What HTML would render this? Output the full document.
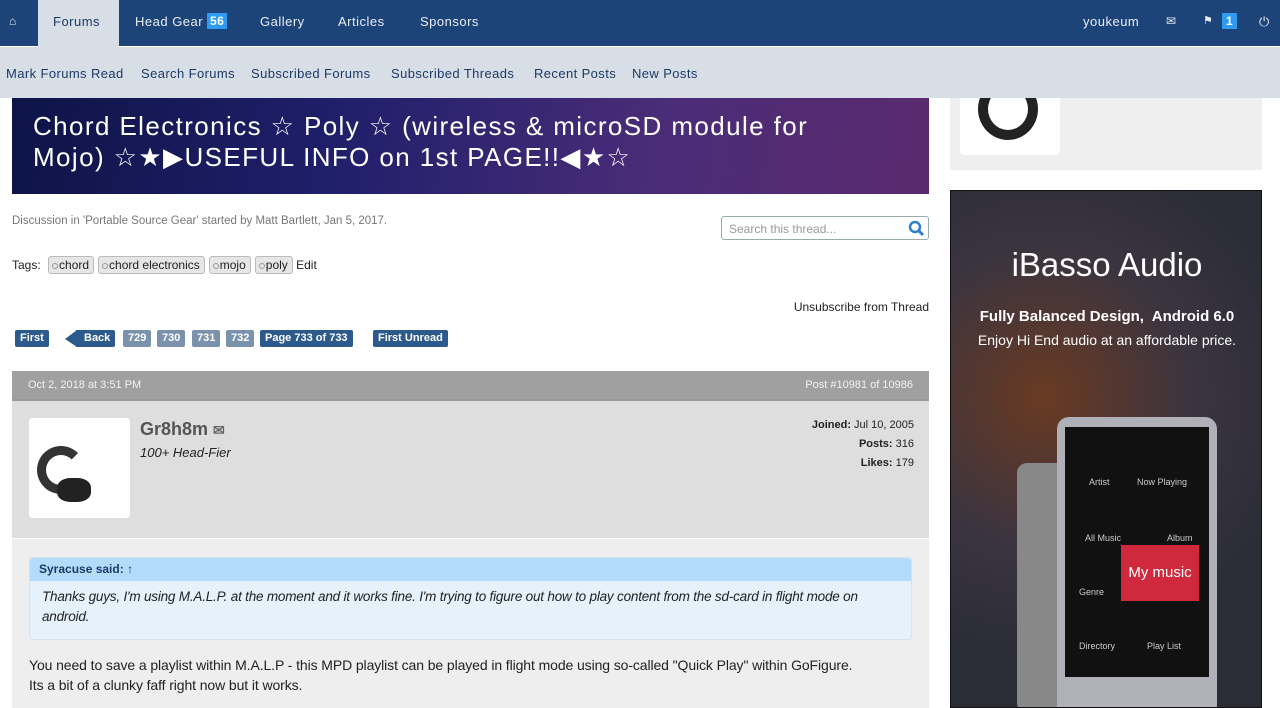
<!DOCTYPE html>
<html><head><meta charset="utf-8"><style>
*{margin:0;padding:0;box-sizing:border-box}
body{width:1280px;height:708px;overflow:hidden;background:#fff;font-family:"Liberation Sans",sans-serif;position:relative}
.a{position:absolute}
#nav{left:0;top:0;width:1280px;height:47px;background:#1d4479;border-bottom:1px solid #fff}
#nav span{position:absolute;top:14px;color:#e8edf4;font-size:13px;letter-spacing:.5px}
#sub{left:0;top:47px;width:1280px;height:51px;background:#d7dee6}
#sub span{position:absolute;top:19px;color:#1d3a66;font-size:13px;letter-spacing:.4px}
.tag{display:inline-block;border:1px solid #bbb;background:#e6e6e6;border-radius:3px;padding:0 4px 0 10px;font-size:12px;height:18px;line-height:16px;margin-left:4px;position:relative}
.tag:before{content:"";position:absolute;left:3px;top:6px;width:4px;height:4px;border:1px solid #999;border-radius:50%}
.pg{position:absolute;top:330px;height:17px;line-height:17px;color:#fff;font-size:11px;font-weight:bold;padding:0 5px;border-radius:2px;background:#2d5a8c}
.pl{background:#7b92ad}
</style></head><body>
<div id="nav" class="a">
 <div class="a" style="left:38px;top:0;width:81px;height:47px;background:#d7dee6"></div>
 <span style="left:9px;font-size:12px">&#8962;</span>
 <span style="left:53px;color:#1d3a66">Forums</span>
 <span style="left:135px">Head Gear</span>
 <span style="left:207px;top:13px;background:#2f9bf0;color:#fff;font-weight:bold;padding:1px 3px;font-size:12px">56</span>
 <span style="left:260px">Gallery</span>
 <span style="left:338px">Articles</span>
 <span style="left:420px">Sponsors</span>
 <span style="left:1083px">youkeum</span>
 <span style="left:1166px;font-size:12px">&#9993;</span>
 <span style="left:1203px;font-size:11px">&#9873;</span>
 <span style="left:1222px;top:13px;background:#2f9bf0;color:#fff;font-weight:bold;padding:1px 4px;font-size:12px">1</span>
 <span style="left:1259px">&#9211;</span>
</div>
<div id="sub" class="a">
 <span style="left:6px">Mark Forums Read</span><span style="left:141px">Search Forums</span><span style="left:251px">Subscribed Forums</span><span style="left:391px">Subscribed Threads</span><span style="left:534px">Recent Posts</span><span style="left:632px">New Posts</span>
</div>
<div class="a" style="left:12px;top:98px;width:917px;height:96px;background:linear-gradient(100deg,#0d1446 0%,#1f1f6a 35%,#4a2c78 70%,#5b2a6e 100%)"></div>
<div class="a" style="left:33px;top:111px;color:#fff;font-size:26px;line-height:31px;letter-spacing:1.4px;white-space:nowrap">Chord Electronics ☆ Poly ☆ (wireless &amp; microSD module for<br>Mojo) ☆★▶USEFUL INFO on 1st PAGE!!◀★☆</div>
<div class="a" style="left:12px;top:215px;font-size:11.5px;color:#777">Discussion in 'Portable Source Gear' started by Matt Bartlett, Jan 5, 2017.</div>
<div class="a" style="left:721px;top:216px;width:208px;height:24px;border:1px solid #9aa;border-radius:3px;font-size:12px;color:#999;padding:5px 7px">Search this thread...<svg style="position:absolute;right:3px;top:3px" width="17" height="17" viewBox="0 0 17 17"><circle cx="7" cy="7" r="5" fill="none" stroke="#2f7fd0" stroke-width="2.5"/><path d="M10.5 10.5L15 15" stroke="#2f7fd0" stroke-width="3"/></svg></div>
<div class="a" style="left:12px;top:256px;font-size:12px;color:#222">Tags: <span class="tag">chord</span><span class="tag">chord electronics</span><span class="tag">mojo</span><span class="tag">poly</span> Edit</div>
<div class="a" style="right:351px;top:300px;font-size:12px;color:#222">Unsubscribe from Thread</div>
<div class="pg" style="left:15px">First</div>
<div class="a" style="left:65px;top:330px;width:0;height:0;border-top:9px solid transparent;border-bottom:8px solid transparent;border-right:12px solid #2d5a8c"></div>
<div class="pg" style="left:76px;border-radius:0 2px 2px 0;padding:0 5px 0 8px">Back</div>
<div class="pg pl" style="left:123px">729</div><div class="pg pl" style="left:157px">730</div><div class="pg pl" style="left:192px">731</div><div class="pg pl" style="left:226px">732</div>
<div class="pg" style="left:260px">Page 733 of 733</div>
<div class="pg" style="left:373px">First Unread</div>
<div class="a" style="left:12px;top:371px;width:917px;height:30px;background:#a0a0a0;border-bottom:2px solid #999;color:#f2f2f2;font-size:11px;line-height:29px;padding:0 16px">Oct 2, 2018 at 3:51 PM<span style="float:right">Post #10981 of 10986</span></div>
<div class="a" style="left:12px;top:401px;width:917px;height:137px;background:#dedede"></div>
<div class="a" style="left:29px;top:418px;width:101px;height:100px;background:#fff;border-radius:4px;overflow:hidden">
 <div class="a" style="left:8px;top:28px;width:48px;height:48px;border:9px solid #333;border-radius:50%;border-right-color:transparent"></div>
 <div class="a" style="left:28px;top:60px;width:34px;height:24px;background:#222;border-radius:40%"></div>
</div>
<div class="a" style="left:140px;top:419px;font-size:18px;font-weight:bold;color:#555">Gr8h8m <span style="font-size:14px;color:#666">&#9993;</span></div>
<div class="a" style="left:140px;top:445px;font-size:13px;font-style:italic;color:#222">100+ Head-Fier</div>
<div class="a" style="left:700px;top:416px;width:214px;text-align:right;font-size:11px;line-height:19px;color:#222"><b>Joined:</b> Jul 10, 2005<br><b>Posts:</b> 316<br><b>Likes:</b> 179</div>
<div class="a" style="left:12px;top:538px;width:917px;height:170px;background:#eeeeee;border-top:1px solid #fff"></div>
<div class="a" style="left:29px;top:557px;width:883px;height:83px;background:#e5f1fb;border:1px solid #d5e3ef;border-radius:4px;overflow:hidden">
 <div style="height:23px;background:#b3dcfb;font-size:12px;font-weight:bold;color:#1d3a66;padding:4px 9px">Syracuse said: <span style="font-weight:normal">&#8593;</span></div>
 <div style="font-size:13.5px;font-style:italic;color:#222;line-height:20px;padding:6px 12px;letter-spacing:-.2px">Thanks guys, I'm using M.A.L.P. at the moment and it works fine. I'm trying to figure out how to play content from the sd-card in flight mode on android.</div>
</div>
<div class="a" style="left:29px;top:655px;width:880px;font-size:14px;color:#222;line-height:20px;letter-spacing:-.1px">You need to save a playlist within M.A.L.P - this MPD playlist can be played in flight mode using so-called "Quick Play" within GoFigure.<br>Its a bit of a clunky faff right now but it works.</div>
<div class="a" style="left:950px;top:98px;width:312px;height:72px;background:#efefef"></div>
<div class="a" style="left:960px;top:98px;width:100px;height:57px;background:#fff;border-radius:0 0 4px 4px;overflow:hidden"><div class="a" style="left:18px;top:-20px;width:60px;height:62px;border:10px solid #222;border-radius:50%"></div></div>
<div class="a" style="left:950px;top:190px;width:312px;height:518px;background:radial-gradient(circle at 30% 40%,#6a3a22 0%,#3a3440 40%,#2a2c36 70%),#2d2f38;border:1px solid #111;overflow:hidden">
 <div class="a" style="left:0;top:55px;width:312px;text-align:center;color:#fff;font-size:33px">iBasso Audio</div>
 <div class="a" style="left:0;top:117px;width:312px;text-align:center;color:#fff;font-size:15px;font-weight:bold">Fully Balanced Design,&nbsp; Android 6.0</div>
 <div class="a" style="left:0;top:141px;width:312px;text-align:center;color:#fff;font-size:14px">Enjoy Hi End audio at an affordable price.</div>
 <div class="a" style="left:66px;top:272px;width:50px;height:250px;background:#888;border-radius:10px"></div>
 <div class="a" style="left:106px;top:226px;width:160px;height:300px;background:#b0b0b8;border-radius:12px"></div>
 <div class="a" style="left:114px;top:236px;width:144px;height:250px;background:#111"></div>
 <div class="a" style="left:170px;top:354px;width:78px;height:56px;background:#d0283c;color:#fff;font-size:15px;line-height:56px;text-align:center">My music</div>
 <div class="a" style="left:138px;top:286px;color:#ccc;font-size:9px">Artist</div>
 <div class="a" style="left:186px;top:286px;color:#ccc;font-size:9px">Now Playing</div>
 <div class="a" style="left:134px;top:342px;color:#ccc;font-size:9px">All Music</div>
 <div class="a" style="left:216px;top:342px;color:#ccc;font-size:9px">Album</div>
 <div class="a" style="left:128px;top:396px;color:#ccc;font-size:9px">Genre</div>
 <div class="a" style="left:128px;top:450px;color:#ccc;font-size:9px">Directory</div>
 <div class="a" style="left:196px;top:450px;color:#ccc;font-size:9px">Play List</div>
</div>
</body></html>
